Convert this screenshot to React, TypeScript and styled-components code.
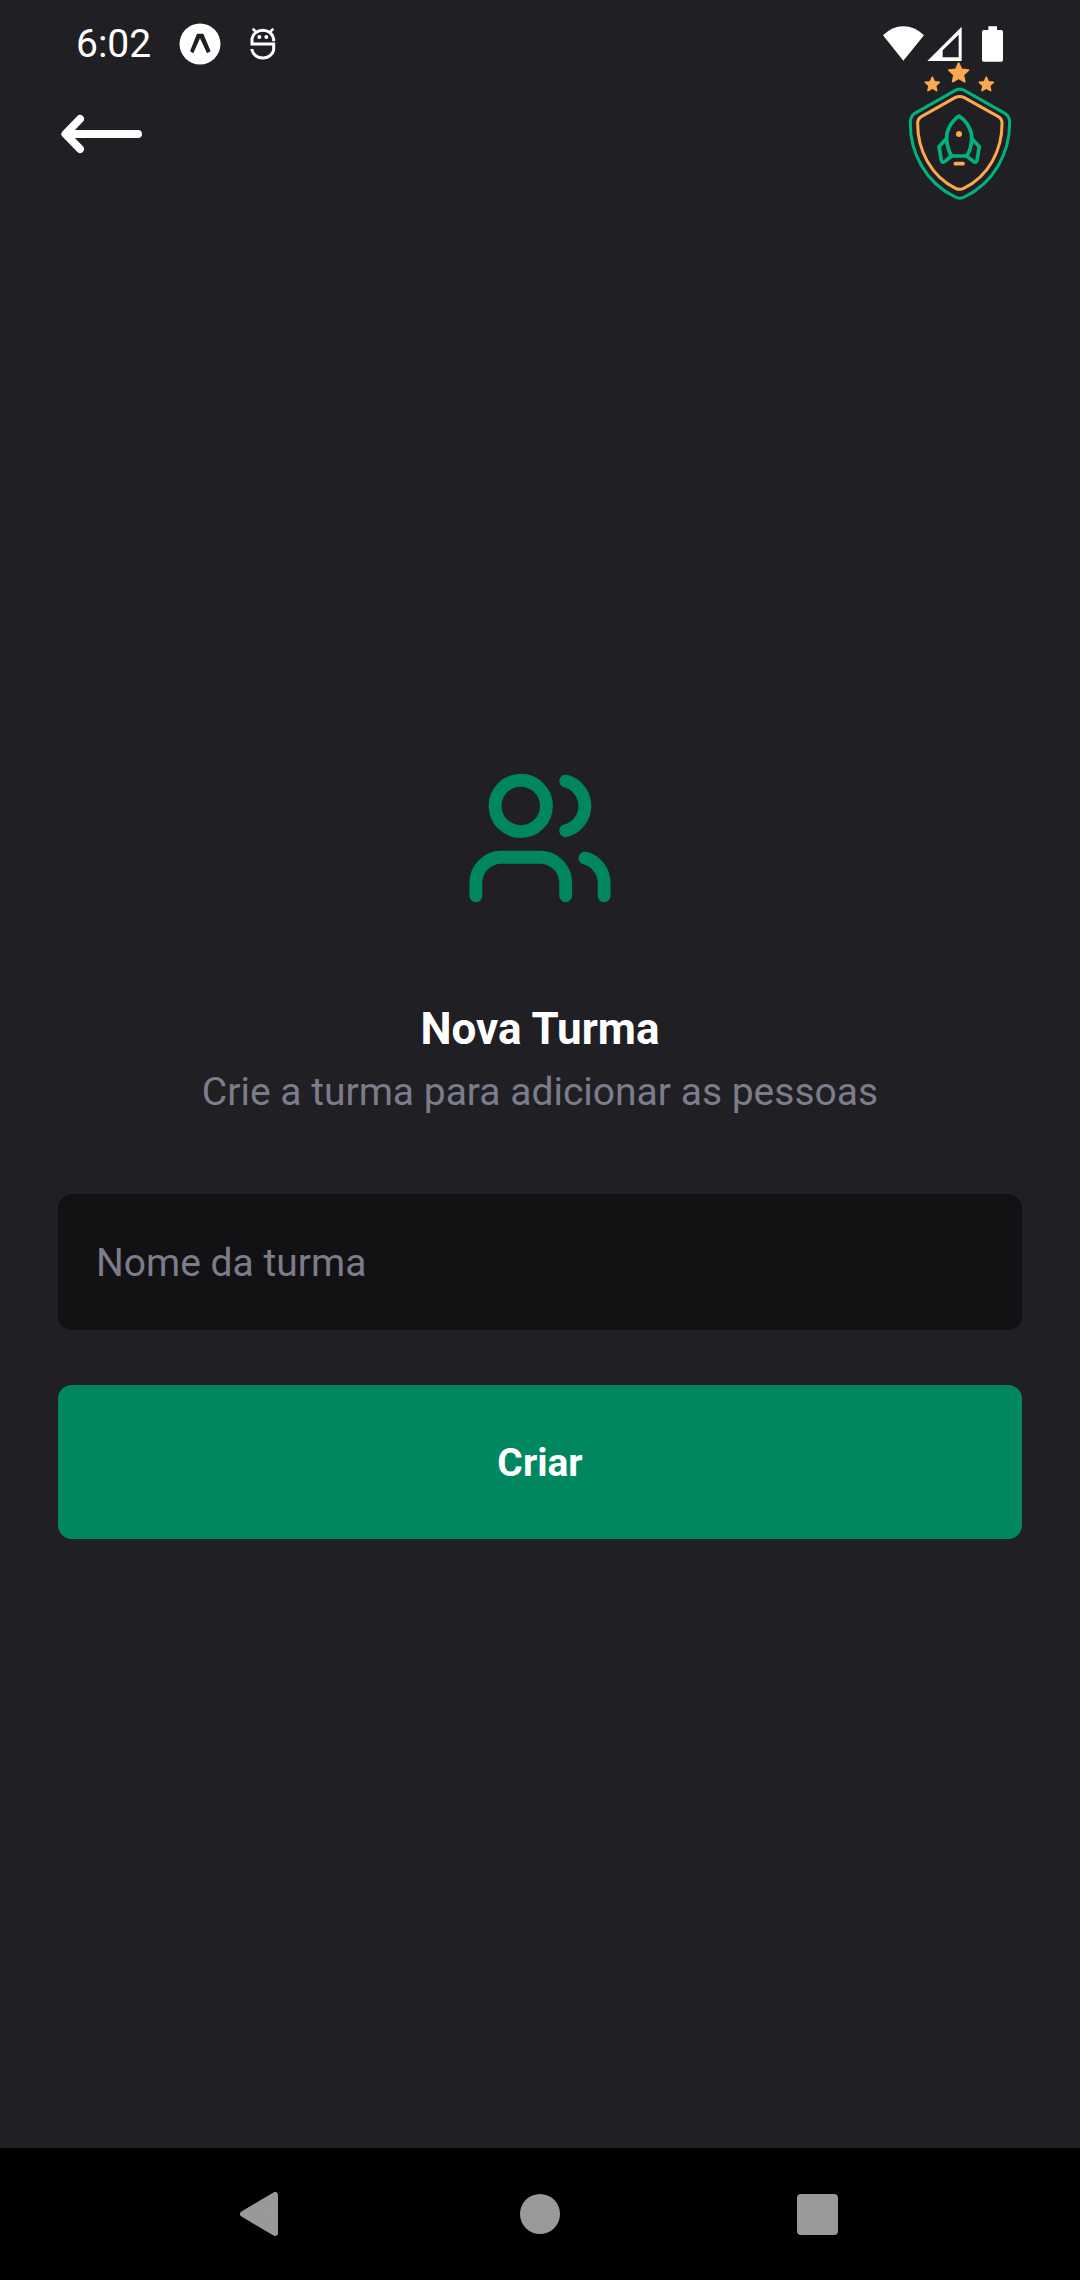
import React, { useState } from "react";
import styled, { createGlobalStyle } from "styled-components";
import { Users } from "lucide-react";

const colors = {
  white: "#ffffff",
  green700: "#00875f",
  green500: "#00b37e",
  orange: "#fba94c",
  gray300: "#7c7c8a",
  gray600: "#202024",
  gray700: "#121214",
  nav: "#999999",
};

const GlobalStyle = createGlobalStyle`
  *, *::before, *::after { box-sizing: border-box; }
  body {
    margin: 0;
    background: ${colors.gray600};
    font-family: Roboto, "Liberation Sans", sans-serif;
  }
  svg { display: block; flex: none; }
`;

const Screen = styled.div`
  position: relative;
  display: flex;
  flex-direction: column;
  min-height: 100vh;
  background: ${colors.gray600};
`;

/* Translucent system bar: it lies over the app's own header. */
const StatusBar = styled.div`
  position: absolute;
  inset: 0 0 auto 0;
  display: flex;
  align-items: center;
  justify-content: space-between;
  height: 88px;
  padding: 0 76px;
  color: ${colors.white};
  pointer-events: none;
`;

const StatusGroup = styled.div<{ $gap: number }>`
  display: flex;
  align-items: center;
  gap: ${({ $gap }) => $gap}px;
`;

const Clock = styled.time`
  font-size: 39px;
  line-height: 48px;
`;

const Main = styled.main`
  flex: 1;
  display: flex;
  flex-direction: column;
  padding: 58px;
`;

const Header = styled.header`
  display: flex;
  align-items: center;
  justify-content: space-between;
`;

const IconButton = styled.button`
  display: flex;
  padding: 0;
  border: 0;
  background: none;
  cursor: pointer;
`;

const Content = styled.form`
  flex: 1;
  display: flex;
  flex-direction: column;
  align-items: center;
  justify-content: center;
`;

const Title = styled.h1`
  margin: 88px 0 0;
  color: ${colors.white};
  font-size: 44px;
  line-height: 52px;
  font-weight: 700;
  text-align: center;
`;

const Subtitle = styled.p`
  margin: 13px 0 78px;
  color: ${colors.gray300};
  font-size: 39px;
  line-height: 48px;
  text-align: center;
`;

const Input = styled.input`
  width: 100%;
  height: 136px;
  padding: 2px 38px 0;
  border: 0;
  border-radius: 14px;
  outline: none;
  background: ${colors.gray700};
  color: ${colors.white};
  font-family: inherit;
  font-size: 39px;

  &::placeholder {
    color: ${colors.gray300};
    opacity: 1;
  }
`;

const SubmitButton = styled.button`
  width: 100%;
  height: 154px;
  margin-top: 55px;
  padding: 2px 0 0;
  border: 0;
  border-radius: 14px;
  background: ${colors.green700};
  color: ${colors.white};
  font-family: inherit;
  font-size: 39px;
  font-weight: 700;
  cursor: pointer;
`;

const NavBar = styled.nav`
  display: flex;
  align-items: center;
  justify-content: center;
  gap: 235px;
  height: 132px;
  background: #000000;
`;

function ExpoIcon() {
  return (
    <svg width="42" height="42" viewBox="421 67 126 126" aria-hidden="true">
      <circle cx="484" cy="130" r="61.5" fill="currentColor" />
      <path
        d="M475 99H494L516 152L505 158L484 113L464 158L454 152Z"
        fill={colors.gray600}
      />
    </svg>
  );
}

function DebugIcon() {
  return (
    <svg
      width="28"
      height="36"
      viewBox="626 76 84 108"
      fill="none"
      stroke="currentColor"
      strokeWidth="9"
      aria-hidden="true"
    >
      <path d="M700 122V114A33 31 0 0 0 635 114V130H700V148A33 29 0 0 1 635 148V145" />
      <path d="M637 84L648 95M699 84L688 95" strokeWidth="8" />
      <circle cx="657" cy="109" r="6" fill="currentColor" stroke="none" />
      <circle cx="678" cy="109" r="6" fill="currentColor" stroke="none" />
    </svg>
  );
}

function SignalIcons() {
  return (
    <svg width="121" height="36" viewBox="69 75 363 108" fill="currentColor" aria-hidden="true">
      <path d="M69 103Q96 76 130 76Q165 76 192 103L130 179Z" />
      <path fillRule="evenodd" d="M202 180L305 77V180ZM248 148V169H296V101Z" />
      <path d="M385 76H411V87H424Q429 87 429 92V177Q429 182 424 182H371Q366 182 366 177V92Q366 87 371 87H385Z" />
    </svg>
  );
}

function BackArrow() {
  return (
    <svg
      width="88"
      height="42"
      viewBox="0 0 88 42"
      fill="none"
      stroke={colors.white}
      strokeWidth="8"
      strokeLinecap="round"
      strokeLinejoin="round"
      aria-hidden="true"
    >
      <path d="M80 21H8M22 6L7.500 21L22 36" />
    </svg>
  );
}

function starPath(cx: number, cy: number, radius: number) {
  const points = Array.from({ length: 10 }, (_, i) => {
    const r = i % 2 === 0 ? radius : radius * 0.47;
    const angle = (Math.PI / 5) * i - Math.PI / 2;
    return `${(cx + r * Math.cos(angle)).toFixed(1)} ${(cy + r * Math.sin(angle)).toFixed(1)}`;
  });
  return `M${points.join("L")}Z`;
}

function TeamsLogo() {
  return (
    <svg
      width="124"
      height="152"
      viewBox="114 174 372 456"
      fill="none"
      strokeLinecap="round"
      strokeLinejoin="round"
      role="img"
      aria-label="Ignite Teams"
    >
      <g fill={colors.orange} stroke={colors.orange} strokeWidth="5">
        <path d={starPath(296, 220, 31)} />
        <path d={starPath(217, 254, 22)} />
        <path d={starPath(379, 254, 22)} />
      </g>
      <g strokeWidth="9">
        <path
          stroke={colors.green500}
          d="M286 271Q299 264 313 271L436 341Q449 349 449 366C450 460 400 550 313 591Q299 598 286 591C199 550 149 460 151 366Q151 349 163 341Z"
        />
        <path
          stroke={colors.orange}
          d="M285 293Q299 286 313 293L415 350Q426 356 426 370C427 450 385 530 311 565Q299 571 287 565C214 530 172 450 173 370Q173 356 184 350Z"
        />
      </g>
      <g stroke={colors.green500} strokeWidth="11">
        <path d="M297 348C270 367 258 396 260 418C261 438 268 456 275 468H320C328 456 334 438 335 418C337 396 325 367 297 348Z" />
        <path d="M259 416L237 440L244 481Q246 489 254 485L275 468" />
        <path d="M336 416L358 440L351 481Q349 489 341 485L320 468" />
      </g>
      <circle cx="297" cy="402" r="9" fill={colors.orange} />
      <path d="M286 491H309" stroke={colors.orange} strokeWidth="11" />
    </svg>
  );
}

export default function App() {
  const [group, setGroup] = useState("");

  return (
    <>
      <GlobalStyle />
      <Screen>
        <Main>
          <Header>
            <IconButton type="button" aria-label="Voltar">
              <BackArrow />
            </IconButton>
            <TeamsLogo />
          </Header>
          <Content onSubmit={(event) => event.preventDefault()}>
            <Users size={154} color={colors.green700} aria-hidden="true" />
            <Title>Nova Turma</Title>
            <Subtitle>Crie a turma para adicionar as pessoas</Subtitle>
            <Input
              type="text"
              aria-label="Nome da turma"
              placeholder="Nome da turma"
              value={group}
              onChange={(event) => setGroup(event.target.value)}
            />
            <SubmitButton type="submit">Criar</SubmitButton>
          </Content>
        </Main>
        <NavBar aria-label="Sistema">
          <IconButton type="button" aria-label="Voltar à tela anterior">
            <svg width="44" height="46" viewBox="0 0 44 46" aria-hidden="true">
              <path
                d="M4 23L36 4V42Z"
                fill={colors.nav}
                stroke={colors.nav}
                strokeWidth="6"
                strokeLinejoin="round"
              />
            </svg>
          </IconButton>
          <IconButton type="button" aria-label="Início">
            <svg width="44" height="46" viewBox="0 0 44 46" aria-hidden="true">
              <circle cx="22" cy="23" r="20" fill={colors.nav} />
            </svg>
          </IconButton>
          <IconButton type="button" aria-label="Aplicativos recentes">
            <svg width="44" height="46" viewBox="0 0 44 46" aria-hidden="true">
              <rect x="0" y="3" width="41" height="41" rx="4" fill={colors.nav} />
            </svg>
          </IconButton>
        </NavBar>
        <StatusBar>
          <StatusGroup $gap={28}>
            <Clock>6:02</Clock>
            <ExpoIcon />
            <DebugIcon />
          </StatusGroup>
          <SignalIcons />
        </StatusBar>
      </Screen>
    </>
  );
}
